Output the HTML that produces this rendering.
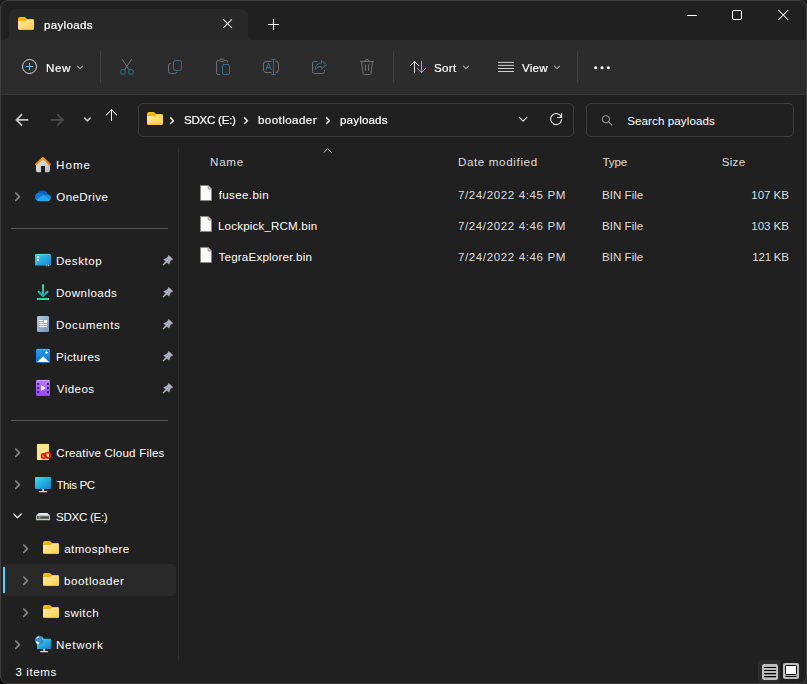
<!DOCTYPE html>
<html><head><meta charset="utf-8"><title>payloads</title>
<style>
*{box-sizing:border-box;margin:0;padding:0}
html,body{width:807px;height:684px;overflow:hidden;background:#0e0e0e}
body{font-family:"Liberation Sans",sans-serif;font-size:11.6px;color:#fff;position:relative}
#win{position:absolute;left:0;top:0;width:807px;height:684px;background:#202020;border-radius:8px;overflow:hidden}
#in{position:absolute;left:0;top:0;width:807px;height:684px}
.abs{position:absolute}
.t{position:absolute;white-space:nowrap;line-height:16px;height:16px}
svg{position:absolute;overflow:visible}
#titlebar{position:absolute;left:0;top:0;width:807px;height:40px;background:#202020}
#tab{position:absolute;left:9px;top:9px;width:239px;height:31px;background:#282828;border-radius:7px 7px 0 0}
.fl{position:absolute;top:35px;width:5px;height:5px;background:#282828}
.fl i{position:absolute;left:0;top:0;width:5px;height:5px;background:#202020}
#toolbar{position:absolute;left:0;top:40px;width:807px;height:54px;background:#2c2c2c}
#tbline{position:absolute;left:0;top:94px;width:807px;height:1px;background:#3a3a3a}
#addr{position:absolute;left:0;top:95px;width:807px;height:49px;background:#202020}
.box{position:absolute;border:1px solid #3b3b3b;border-radius:5px;background:#202020}
#main{position:absolute;left:0;top:144px;width:807px;height:540px;background:#202020}
.sep{position:absolute;width:1px;background:#3e3e3e}
.hsep{position:absolute;height:1px;background:#565656;left:11px;width:157px}
.d{color:#dedede}
.g{will-change:transform;-webkit-text-stroke:0.2px #fff}
.s{color:#e2e2e2;-webkit-text-stroke:0.1px #e2e2e2}
.cn{position:absolute;width:9px;height:9px}
</style></head><body>
<div class="cn" style="left:0;top:0;background:#1a1a1a"></div><div class="cn" style="right:0;top:0;background:#1e1e1e"></div><div class="cn" style="left:0;bottom:0;background:#070707"></div><div class="cn" style="right:0;bottom:0;background:#2a2a2a"></div>
<div id="win"><div id="in">
<div id="titlebar"></div>
<div id="tab"></div>
<div class="fl" style="left:4px"><i style="border-bottom-right-radius:5px"></i></div>
<div class="fl" style="left:248px"><i style="border-bottom-left-radius:5px"></i></div>
<div id="toolbar"></div>
<div id="tbline"></div>
<div id="addr"></div>
<div id="main"></div>
<div class="sep" style="left:100px;top:51px;height:32px"></div>
<div class="sep" style="left:393px;top:51px;height:32px"></div>
<div class="sep" style="left:577px;top:51px;height:32px"></div>
<div class="box" style="left:138px;top:103px;width:436px;height:34px"></div>
<div class="box" style="left:586px;top:103px;width:208px;height:34px"></div>
<div class="sep" style="left:178px;top:148px;height:512px;background:#2e2e2e"></div>
<div class="hsep" style="top:228px"></div>
<div class="hsep" style="top:420px"></div>
<div class="abs" style="left:3px;top:564px;width:173px;height:32px;background:#292929;border-radius:4px"></div>
<div class="abs" style="left:3px;top:567px;width:2px;height:26px;background:#5fcdfb"></div>
<svg width="807" height="684" viewBox="0 0 807 684" style="left:0;top:0" fill="none">
<defs>
<linearGradient id="gf" x1="0" y1="0" x2="1" y2="1"><stop offset="0" stop-color="#ffeaa6"/><stop offset="1" stop-color="#ffce48"/></linearGradient>
<linearGradient id="gt" x1="0" y1="0" x2="0" y2="1"><stop offset="0" stop-color="#fbbd0a"/><stop offset="1" stop-color="#eaa700"/></linearGradient>
<g id="folder">
 <path d="M0 2.2Q0 0.2 2 0.2H6.3Q7.2 0.2 7.8 0.9L8.9 2.1H14.2Q16 2.1 16 3.9V8H0Z" fill="url(#gt)"/>
 <path d="M8.6 2.1H14.2Q16 2.1 16 3.9V6H8Z" fill="#ffc524"/>
 <path d="M0 4.2H7.2Q7.9 4.2 8.4 3.7L8.9 3.2H14.4Q16 3.2 16 4.8V11.4Q16 13.1 14.3 13.1H1.7Q0 13.1 0 11.4Z" fill="url(#gf)"/>
 <path d="M0.3 12H15.7Q15.5 13.1 14.3 13.1H1.7Q0.5 13.1 0.3 12Z" fill="#f7bd2a" opacity=".8"/>
</g>
<g id="chev"><path d="M-2.6 -1.3L0 1.3L2.6 -1.3" stroke="#a8a8a8" stroke-width="1.1" stroke-linecap="round" stroke-linejoin="round"/></g>
<g id="rchev"><path d="M-1.9 -3.7L1.9 0L-1.9 3.7" stroke="#8d8d8d" stroke-width="1.5" stroke-linecap="round" stroke-linejoin="round"/></g>
<g id="bchev"><path d="M-1.4 -2.8L1.4 0L-1.4 2.8" stroke="#e4e4e4" stroke-width="1.6" stroke-linecap="round" stroke-linejoin="round"/></g>
<g id="pin"><path d="M13.7 7L18.2 11.2L15.4 13L14 16.5L11.9 14.6L8.4 17.5L7.5 16.7L10.4 13.2L8.2 11.4L11.9 9.8Z" fill="#a3adb5"/></g>
<linearGradient id="gmon" x1="0" y1="0" x2="1" y2="1"><stop offset="0" stop-color="#3fe0ee"/><stop offset=".5" stop-color="#27aedc"/><stop offset="1" stop-color="#1279d2"/></linearGradient>
<linearGradient id="gdesk" x1="0" y1="0" x2="1" y2="1"><stop offset="0" stop-color="#3bd2e6"/><stop offset="1" stop-color="#1783d6"/></linearGradient>
<linearGradient id="gdl" x1="0" y1="0" x2="0" y2="1"><stop offset="0" stop-color="#35dc9c"/><stop offset=".6" stop-color="#2bc7a4"/><stop offset="1" stop-color="#149fbd"/></linearGradient>
<linearGradient id="gdoc" x1="0" y1="0" x2="1" y2="1"><stop offset="0" stop-color="#b1c9e6"/><stop offset="1" stop-color="#7596bd"/></linearGradient>
<linearGradient id="gpic" x1="0" y1="0" x2="0" y2="1"><stop offset="0" stop-color="#2a9ceb"/><stop offset="1" stop-color="#0d72cf"/></linearGradient>
<linearGradient id="gvid" x1="0" y1="0" x2="0" y2="1"><stop offset="0" stop-color="#bb7bff"/><stop offset="1" stop-color="#9546fb"/></linearGradient>
<linearGradient id="groof" x1="0" y1="0" x2="1" y2="0"><stop offset="0" stop-color="#f57c00"/><stop offset=".5" stop-color="#ff9f0a"/><stop offset="1" stop-color="#e85a00"/></linearGradient>
<linearGradient id="ghouse" x1="0" y1="0" x2="1" y2="1"><stop offset="0" stop-color="#e6e8ea"/><stop offset="1" stop-color="#b9b9b9"/></linearGradient>
</defs>

<!-- tab folder + close + plus -->
<use href="#folder" x="18" y="16.8"/>
<path d="M223.3 19.3L231.9 27.9M231.9 19.3L223.3 27.9" stroke="#e6e6e6" stroke-width="1.1"/>
<path d="M268 24.5H279M273.5 19V30" stroke="#f0f0f0" stroke-width="1.1"/>
<!-- window controls -->
<path d="M687 15.5H697" stroke="#fff" stroke-width="1"/>
<rect x="732.5" y="10.5" width="9" height="9" rx="1.5" stroke="#fff" stroke-width="1"/>
<path d="M778.3 10L788.3 20M788.3 10L778.3 20" stroke="#fff" stroke-width="1.05"/>

<!-- New -->
<circle cx="29.5" cy="66.5" r="7" stroke="#dcdcdc" stroke-width="1"/>
<path d="M26 66.5H33M29.5 63V70" stroke="#4cc2ff" stroke-width="1.1"/>
<use href="#chev" x="80" y="67.4"/>
<!-- Cut -->
<path d="M122 59L129.4 70.2M131.8 59L124.4 70.2" stroke="#707070" stroke-width="1"/>
<circle cx="123" cy="72" r="2.5" stroke="#2d7199" stroke-width="1"/>
<circle cx="131" cy="72" r="2.5" stroke="#2d7199" stroke-width="1"/>
<!-- Copy -->
<path d="M171 63.5H170.3Q168.5 63.5 168.5 65.3V71.5Q168.5 73.5 170.5 73.5H174.7Q176.4 73.5 176.6 72" stroke="#707070" stroke-width="1"/>
<rect x="173.5" y="60.5" width="8" height="10" rx="2" stroke="#2d7199" stroke-width="1"/>
<!-- Paste -->
<path d="M220 74.5H218.2Q216.5 74.5 216.5 72.8V62.2Q216.5 60.5 218.2 60.5H226.2Q227.7 60.5 227.7 62.3" stroke="#707070" stroke-width="1"/>
<ellipse cx="222" cy="60.3" rx="2.6" ry="1.3" stroke="#707070" stroke-width="1" fill="#2b2b2b"/>
<rect x="222.5" y="64.5" width="7" height="10" rx="1.5" stroke="#2d7199" stroke-width="1"/>
<!-- Rename -->
<path d="M271.5 61.5H266Q263.5 61.5 263.5 64V70Q263.5 72.5 266 72.5H271.5M275.5 61.5H276Q278.5 61.5 278.5 64V70Q278.5 72.5 276 72.5H275.5" stroke="#707070" stroke-width="1"/>
<path d="M273.5 59.5V74.5M271.3 59.5H275.7M271.3 74.5H275.7" stroke="#2d7199" stroke-width="1"/>
<path d="M265.8 70L268.6 63.4L271.4 70M266.8 67.8H270.4" stroke="#2d7199" stroke-width="1" stroke-linejoin="round"/>
<!-- Share -->
<path d="M317.5 61.5H314.5Q312.5 61.5 312.5 63.5V71.5Q312.5 73.5 314.5 73.5H322.5Q324.5 73.5 324.5 71.5V69.8" stroke="#707070" stroke-width="1"/>
<path d="M321.5 60.5L326.5 64.7L321.5 68.8V66.3Q317.5 66 315.2 69.6Q315.6 63.6 321.5 63Z" stroke="#2d7199" stroke-width="1" stroke-linejoin="round"/>
<!-- Delete -->
<path d="M360 61.5H374M365 61.3Q365 59.5 367 59.5Q369 59.5 369 61.3M361.6 61.5L363 73.2Q363.2 74.5 364.5 74.5H369.5Q370.8 74.5 371 73.2L372.4 61.5M365.5 64.5V70.8M368.5 64.5V70.8" stroke="#707070" stroke-width="1"/>
<!-- Sort -->
<path d="M414.5 61.5V72.8M410.2 65.8L414.5 61.3L418.8 65.8" stroke="#e0e0e0" stroke-width="1" stroke-linejoin="round" stroke-linecap="round"/>
<path d="M421.5 61.2V72.5M417.3 68.2L421.5 72.7L425.8 68.2" stroke="#4cc2ff" stroke-width="1" stroke-linejoin="round" stroke-linecap="round"/>
<use href="#chev" x="466" y="67.4"/>
<!-- View -->
<path d="M498 62.4H514M498 65.4H514M498 68.5H514M498 71.5H514" stroke="#dadada" stroke-width=".95"/>
<use href="#chev" x="557" y="67.4"/>
<!-- More -->
<circle cx="595.7" cy="67.8" r="1.55" fill="#fff"/><circle cx="602" cy="67.8" r="1.55" fill="#fff"/><circle cx="608.3" cy="67.8" r="1.55" fill="#fff"/>

<!-- nav arrows -->
<path d="M27.6 119.9H16.6M21.6 114.6L16.4 119.9L21.6 125.2" stroke="#c4c4c4" stroke-width="1.7" stroke-linecap="round" stroke-linejoin="round"/>
<path d="M51.6 119.9H62.6M57.6 114.6L62.8 119.9L57.6 125.2" stroke="#4a4a4a" stroke-width="1.7" stroke-linecap="round" stroke-linejoin="round"/>
<path d="M84.6 118L87.4 120.9L90.2 118" stroke="#c4c4c4" stroke-width="1.6" stroke-linecap="round" stroke-linejoin="round"/>
<path d="M111.5 109.8V120.6M106.4 114.9L111.5 109.6L116.6 114.9" stroke="#f4f4f4" stroke-width="1.05" stroke-linecap="round" stroke-linejoin="round"/>
<!-- address folder / chevrons -->
<use href="#folder" x="147" y="111.8"/>
<use href="#bchev" x="172" y="120.7"/>
<use href="#bchev" x="246" y="120.7"/>
<use href="#bchev" x="328" y="120.7"/>
<path d="M519.3 117.4L523.1 121.2L526.9 117.4" stroke="#f0f0f0" stroke-width="1.05" stroke-linecap="round" stroke-linejoin="round"/>
<path d="M561.3 117.2A5.5 5.5 0 1 0 561.6 119.6" stroke="#f0f0f0" stroke-width="1.05" stroke-linecap="round"/>
<path d="M561.6 113.4V117.4H557.6" stroke="#f0f0f0" stroke-width="1.05" stroke-linecap="round" stroke-linejoin="round"/>
<circle cx="605.9" cy="119.2" r="3.6" stroke="#a6a6a6" stroke-width=".95"/>
<path d="M608.6 121.9L612 125.1" stroke="#a6a6a6" stroke-width="1.05" stroke-linecap="round"/>

<!-- header sort chevron -->
<path d="M324 152.4L327.7 148.6L331.4 152.4" stroke="#b4b4b4" stroke-width="1" stroke-linecap="round" stroke-linejoin="round"/>

<!-- file icons -->
<g id="file">
<path d="M200.5 185.5H208.3L211.5 188.7V200.5H200.5Z" fill="#fbfbfb" stroke="#8a8682" stroke-width="1"/>
<path d="M208.2 185.8V188.9H211.3" stroke="#8a8682" stroke-width="1" fill="none"/>
</g>
<use href="#file" y="31"/>
<use href="#file" y="62"/>

<!-- Home -->
<path d="M36 164.2L43 158.6L50 164.2V170.5Q50 172.2 48.3 172.2H45V166H41V172.2H37.7Q36 172.2 36 170.5Z" fill="url(#ghouse)"/>
<path d="M36 164.2L42.9 158L49.9 164.2" stroke="url(#groof)" stroke-width="2.1" stroke-linecap="round" stroke-linejoin="round"/>
<!-- OneDrive -->
<path d="M38.3 192.6A5.2 5.2 0 0 1 47.6 194.4L44 198.5Z" fill="#0a5fb4"/>
<path d="M40.8 191.6A5.2 5.2 0 0 1 48 194.2Q51 194.6 51 197.6L43 197.8L39 193Z" fill="#0364b8"/>
<path d="M35 197.4A4.4 4.4 0 0 1 41.6 193.1L45.5 195.6L39 200.6H38.2Q35.2 200.4 35 197.4Z" fill="#0f78d4"/>
<path d="M45.2 195.4A3.6 3.6 0 0 1 51 197.9Q50.9 200.3 48.5 201H47L42.5 197.2Z" fill="#1490df"/>
<path d="M36.2 199.6L43.8 194.9L49.9 199.8Q49.1 201.1 47.6 201.2H39.2Q37.2 201.2 36.2 199.6Z" fill="#28a8ea"/>
<!-- Desktop -->
<rect x="35" y="254" width="16" height="11.6" rx="1.2" fill="url(#gdesk)"/>
<path d="M36 254.4H50" stroke="#7be4f2" stroke-width=".8" opacity=".8"/>
<rect x="37" y="256.1" width="2" height="2" fill="#fff"/><rect x="37" y="259.2" width="2" height="2" fill="#fff"/>
<rect x="46" y="264.8" width="1.1" height="1.4" fill="#eaf4ff"/><rect x="48" y="264.8" width="1.1" height="1.4" fill="#eaf4ff"/>
<!-- Downloads -->
<path d="M43 284.9V296M38.6 291.8L43 296.2L47.4 291.8" stroke="url(#gdl)" stroke-width="2" stroke-linecap="round" stroke-linejoin="round"/>
<rect x="36.8" y="297.9" width="12.3" height="2.1" rx=".4" fill="#2fd69f"/>
<!-- Documents -->
<rect x="37" y="316" width="12" height="16" rx="1.2" fill="url(#gdoc)"/>
<path d="M39 320.5H43M39 322.6H43M39 324.6H47M39 326.6H47" stroke="#fff" stroke-width="1"/>
<rect x="44" y="320" width="3.1" height="2.9" fill="#fff"/>
<!-- Pictures -->
<rect x="36" y="349" width="14" height="14" rx="1.3" fill="url(#gpic)"/>
<path d="M37 349.4H49" stroke="#5dbbf7" stroke-width=".8"/>
<path d="M37.2 361.9L43.2 356.2L49 361.9Z" fill="#fff"/>
<path d="M46.5 350.9L48.1 352.5L46.5 354.1L44.9 352.5Z" fill="#fff"/>
<!-- Videos -->
<rect x="36" y="380" width="14" height="16" rx="1.3" fill="url(#gvid)"/>
<path d="M37 380.4H49" stroke="#d6aaff" stroke-width=".8"/>
<g fill="#3d2366"><rect x="37.2" y="383" width="1.9" height="2"/><rect x="37.2" y="387" width="1.9" height="2"/><rect x="37.2" y="391" width="1.9" height="2"/><rect x="47" y="383" width="1.9" height="2"/><rect x="47" y="387" width="1.9" height="2"/><rect x="47" y="391" width="1.9" height="2"/></g>
<path d="M41 384.9L45.8 388L41 391.1Z" fill="#f4f4ee"/>
<!-- pins -->
<use href="#pin" x="155" y="248"/><use href="#pin" x="155" y="280"/><use href="#pin" x="155" y="312"/><use href="#pin" x="155" y="344"/><use href="#pin" x="155" y="376"/>

<!-- Creative Cloud Files -->
<rect x="37" y="444" width="12" height="16" rx=".6" fill="#ffe796"/>
<rect x="37.4" y="444.4" width="11.2" height="15.2" rx=".4" stroke="#ffd95e" stroke-width=".8"/>
<circle cx="48" cy="455.2" r="2.7" stroke="#e0140e" stroke-width="1.5"/>
<circle cx="43.6" cy="456" r="2.1" stroke="#e0140e" stroke-width="1.6" fill="#f3a58f"/>
<path d="M43.2 454.2L47.2 457.6" stroke="#e0140e" stroke-width="1.5" stroke-linecap="round"/>
<!-- This PC -->
<rect x="35" y="477" width="16" height="12" rx=".8" fill="url(#gmon)"/>
<rect x="42.1" y="489" width="1.9" height="2.2" fill="#c9ced6"/>
<rect x="38.8" y="490.9" width="8.4" height="1.4" rx=".5" fill="#d4d9e0"/>
<!-- SDXC drive -->
<path d="M38.6 513H47.5L50 515.7H36.1Z" fill="#ececec"/>
<rect x="36.1" y="515.6" width="13.9" height="4.6" rx=".5" fill="#c9c9c9"/>
<rect x="37" y="516.3" width="12.1" height="2.5" fill="#4e4e4e"/>
<circle cx="39.5" cy="517.5" r=".9" fill="#34e04a"/>
<!-- folders -->
<use href="#folder" x="43" y="540.9"/><use href="#folder" x="43" y="572.9"/><use href="#folder" x="43" y="604.9"/>
<!-- Network -->
<rect x="37" y="638.8" width="14" height="10.3" rx=".6" fill="url(#gmon)"/>
<rect x="43.2" y="649" width="1.9" height="2.2" fill="#c9ced6"/>
<rect x="40" y="650.9" width="8" height="1.4" rx=".5" fill="#d4d9e0"/>
<circle cx="39.4" cy="640.3" r="4.5" fill="#3a8ec9"/>
<path d="M36 638.5Q37.5 636.3 39.5 636.3Q38.8 638 37.2 638.6ZM42.2 637.5Q43.6 638.8 43.6 640.6Q42.4 640 42.2 637.5ZM35.7 641.5Q37.6 640.9 39.4 642.6Q39.3 644 38 644.4Q36.2 643.5 35.7 641.5Z" fill="#e4f3fb"/>

<!-- tree chevrons -->
<use href="#rchev" x="17.6" y="196.7"/>
<use href="#rchev" x="17.6" y="452.7"/>
<use href="#rchev" x="17.6" y="484.7"/>
<path d="M13.8 514L17.5 517.7L21.2 514" stroke="#e6e6e6" stroke-width="1.3" stroke-linecap="round" stroke-linejoin="round"/>
<use href="#rchev" x="25.6" y="548.7"/>
<use href="#rchev" x="25.6" y="580.7"/>
<use href="#rchev" x="25.6" y="612.7"/>
<use href="#rchev" x="17.6" y="644.7"/>

<!-- status view buttons -->
<rect x="758" y="660" width="22" height="22.5" rx="3" fill="#2d2d2d"/>
<rect x="762" y="664" width="16" height="16" rx="2" fill="#bdbdbd"/>
<path d="M764 667.5H776M764 670.5H776M764 673.6H776M764 676.6H776" stroke="#000" stroke-width="1.1"/>
<rect x="783" y="663" width="16" height="16" rx="2" fill="#bdbdbd"/>
<rect x="785.5" y="665.5" width="11" height="9" rx=".8" fill="#fff" stroke="#000" stroke-width="1"/>
<path d="M785.5 676.5H796.5" stroke="#000" stroke-width="1"/>
<rect x=".5" y=".5" width="806" height="683" rx="7.5" stroke="#3e3e3e" stroke-width="1.15"/>
</svg>
<div class="t g" style="left:44.11px;top:17.0px;letter-spacing:0.310px">payloads</div>
<div class="t g" style="left:45.82px;top:59.5px;letter-spacing:0.571px">New</div>
<div class="t g" style="left:433.89px;top:59.5px;letter-spacing:0.322px">Sort</div>
<div class="t g" style="left:522.17px;top:59.5px;letter-spacing:0.212px">View</div>
<div class="t g" style="left:183.98px;top:112.0px;letter-spacing:-0.269px">SDXC (E:)</div>
<div class="t g" style="left:258.33px;top:112.0px;letter-spacing:0.421px">bootloader</div>
<div class="t g" style="left:340.31px;top:112.0px;letter-spacing:0.153px">payloads</div>
<div class="t" style="left:627.20px;top:112.8px;letter-spacing:0.092px">Search payloads</div>
<div class="t" style="left:55.98px;top:156.5px;letter-spacing:1.057px">Home</div>
<div class="t" style="left:56.27px;top:188.5px;letter-spacing:0.381px">OneDrive</div>
<div class="t" style="left:55.98px;top:252.5px;letter-spacing:0.530px">Desktop</div>
<div class="t" style="left:56.01px;top:284.5px;letter-spacing:0.445px">Downloads</div>
<div class="t" style="left:56.01px;top:316.5px;letter-spacing:0.648px">Documents</div>
<div class="t" style="left:55.98px;top:348.5px;letter-spacing:0.303px">Pictures</div>
<div class="t" style="left:56.81px;top:380.5px;letter-spacing:0.419px">Videos</div>
<div class="t" style="left:56.32px;top:444.5px;letter-spacing:0.196px">Creative Cloud Files</div>
<div class="t" style="left:56.45px;top:476.5px;letter-spacing:-0.431px">This PC</div>
<div class="t" style="left:56.07px;top:508.5px;letter-spacing:-0.314px">SDXC (E:)</div>
<div class="t" style="left:64.20px;top:540.5px;letter-spacing:0.434px">atmosphere</div>
<div class="t" style="left:64.08px;top:572.5px;letter-spacing:0.559px">bootloader</div>
<div class="t" style="left:64.20px;top:604.5px;letter-spacing:0.478px">switch</div>
<div class="t" style="left:56.03px;top:636.5px;letter-spacing:0.696px">Network</div>
<div class="t" style="left:15.58px;top:663.5px;letter-spacing:0.543px">3 items</div>
<div class="t d" style="left:210.07px;top:153.5px;letter-spacing:0.713px">Name</div>
<div class="t d" style="left:457.90px;top:153.5px;letter-spacing:0.643px">Date modified</div>
<div class="t d" style="left:602.44px;top:153.5px;letter-spacing:-0.097px">Type</div>
<div class="t d" style="left:721.76px;top:153.5px;letter-spacing:0.273px">Size</div>
<div class="t" style="left:218.69px;top:186.5px;letter-spacing:0.363px">fusee.bin</div>
<div class="t" style="left:218.01px;top:217.5px;letter-spacing:0.164px">Lockpick_RCM.bin</div>
<div class="t" style="left:218.50px;top:248.5px;letter-spacing:0.195px">TegraExplorer.bin</div>
<div class="t d" style="left:457.90px;top:186.5px;letter-spacing:0.599px">7/24/2022 4:45 PM</div>
<div class="t d" style="left:457.90px;top:217.5px;letter-spacing:0.599px">7/24/2022 4:46 PM</div>
<div class="t d" style="left:457.90px;top:248.5px;letter-spacing:0.599px">7/24/2022 4:46 PM</div>
<div class="t d" style="left:601.99px;top:186.5px;letter-spacing:0.011px">BIN File</div>
<div class="t d" style="left:601.99px;top:217.5px;letter-spacing:0.011px">BIN File</div>
<div class="t d" style="left:601.99px;top:248.5px;letter-spacing:0.011px">BIN File</div>
<div class="t d" style="left:751.37px;top:186.5px;letter-spacing:-0.085px">107 KB</div>
<div class="t d" style="left:751.37px;top:217.5px;letter-spacing:-0.085px">103 KB</div>
<div class="t d" style="left:752.37px;top:248.5px;letter-spacing:-0.285px">121 KB</div>
</div></div>
</body></html>
